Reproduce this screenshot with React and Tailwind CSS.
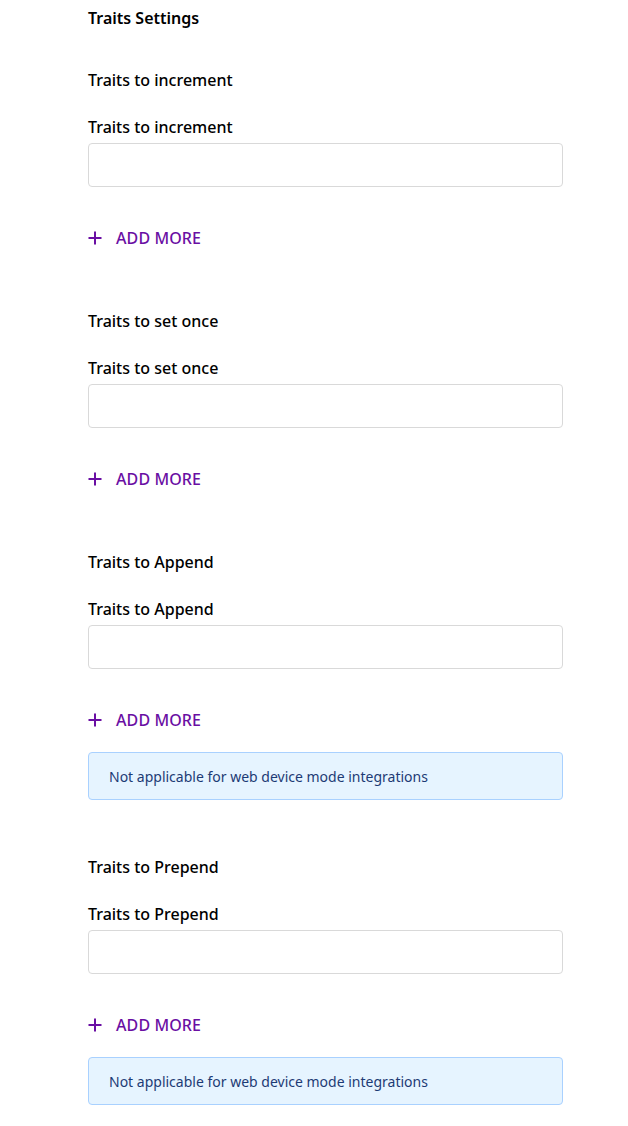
import React from 'react';

const PlusIcon = () => (
  <svg width="14" height="14" viewBox="0 0 14 14" fill="none">
    <path d="M7 0.5v13M0.5 7h13" stroke="currentColor" strokeWidth="2" />
  </svg>
);

const TraitSection = ({ title, note }) => (
  <div className={`flex flex-col ${note ? 'pb-[56px]' : 'pb-[60px]'}`}>
    <div className="text-[16px] font-medium leading-[22px] text-black">{title}</div>
    <label className="mt-[25px] text-[16px] font-medium leading-[22px] text-black">{title}</label>
    <input
      type="text"
      className="mt-[5px] h-[44px] w-full rounded-[4px] border border-[#d9d9d9] bg-white outline-none"
    />
    <button className="mt-[39px] flex h-[24px] items-center gap-[14px] text-[#6a0fa3]">
      <PlusIcon />
      <span className="text-[16px] font-medium tracking-[0.1px]">ADD MORE</span>
    </button>
    {note && (
      <div className="mt-[20px] flex h-[48px] items-center rounded-[4px] border border-[#a9d1ff] bg-[#e6f4ff] px-[20px] text-[14px] text-[#1d3b75]">
        {note}
      </div>
    )}
  </div>
);

export default function App() {
  const note = 'Not applicable for web device mode integrations';
  return (
    <div className="min-h-screen bg-white font-['Noto_Sans',sans-serif]">
      <div className="ml-[88px] w-[475px] pt-[7px]">
        <div className="text-[16px] font-semibold leading-[22px] text-black">Traits Settings</div>
        <div className="mt-[40px] flex flex-col">
          <TraitSection title="Traits to increment" />
          <TraitSection title="Traits to set once" />
          <TraitSection title="Traits to Append" note={note} />
          <TraitSection title="Traits to Prepend" note={note} />
        </div>
      </div>
    </div>
  );
}
